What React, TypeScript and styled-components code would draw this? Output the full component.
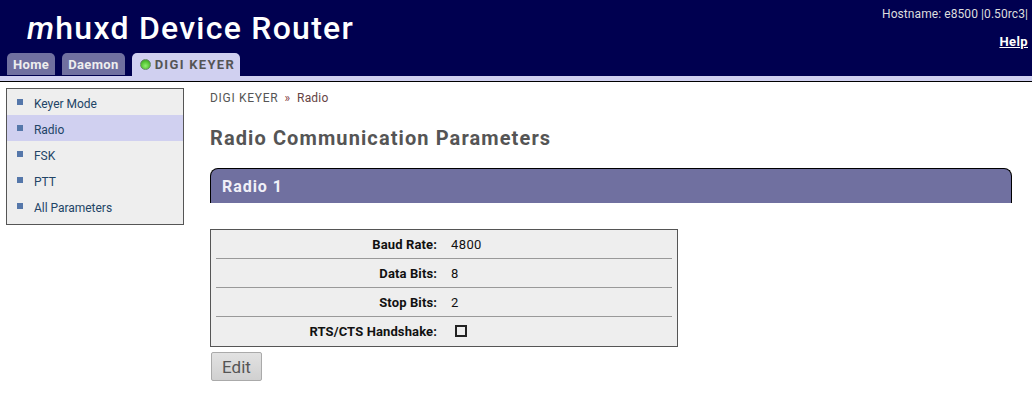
import React from "react";
import styled, { createGlobalStyle } from "styled-components";

const GlobalStyle = createGlobalStyle`
  html, body {
    margin: 0;
    padding: 0;
    background: #fff;
    font-family: "Roboto", "Liberation Sans", sans-serif;
  }
`;

const navItems = ["Keyer Mode", "Radio", "FSK", "PTT", "All Parameters"];

const params = [
  { label: "Baud Rate:", value: "4800" },
  { label: "Data Bits:", value: "8" },
  { label: "Stop Bits:", value: "2" },
];

export default function App() {
  return (
    <Page>
      <GlobalStyle />
      <Header>
        <TopRow>
          <Title>
            <em>m</em>huxd Device Router
          </Title>
          <Meta>
            <Hostname>Hostname: e8500 |0.50rc3|</Hostname>
            <Help href="#">Help</Help>
          </Meta>
        </TopRow>
        <Tabs>
          <Tab>Home</Tab>
          <Tab>Daemon</Tab>
          <Tab $active>
            <Led />
            DIGI KEYER
          </Tab>
        </Tabs>
      </Header>
      <Band />
      <Body>
        <Sidebar>
          {navItems.map((item) => (
            <NavItem key={item} $active={item === "Radio"}>
              <Bullet />
              {item}
            </NavItem>
          ))}
        </Sidebar>
        <Main>
          <Crumbs>
            DIGI KEYER <Sep>»</Sep> <CrumbLink>Radio</CrumbLink>
          </Crumbs>
          <Heading>Radio Communication Parameters</Heading>
          <Banner>Radio 1</Banner>
          <ParamTable>
            {params.map((p) => (
              <Row key={p.label}>
                <Label>{p.label}</Label>
                <Value>{p.value}</Value>
              </Row>
            ))}
            <Row>
              <Label>RTS/CTS Handshake:</Label>
              <Value>
                <Check />
              </Value>
            </Row>
          </ParamTable>
          <EditButton>Edit</EditButton>
        </Main>
      </Body>
    </Page>
  );
}

const Page = styled.div`
  width: 1032px;
  height: 409px;
  overflow: hidden;
  background: #fff;
`;

const Header = styled.div`
  height: 76px;
  background: #000050;
  display: flex;
  flex-direction: column;
  justify-content: space-between;
`;

const TopRow = styled.div`
  display: flex;
  justify-content: space-between;
  height: 53px;
`;

const Title = styled.h1`
  margin: 9px 0 0 27px;
  font-size: 32px;
  line-height: 38px;
  font-weight: 500;
  color: #fff;
  letter-spacing: 1.25px;
  white-space: nowrap;

  em {
    font-style: italic;
  }
`;

const Meta = styled.div`
  display: flex;
  flex-direction: column;
  align-items: flex-end;
  padding: 7px 0 0;
`;

const Hostname = styled.div`
  font-size: 12px;
  line-height: 14px;
  color: #ddd;
  padding-right: 4px;
  letter-spacing: 0.08px;
`;

const Help = styled.a`
  margin-top: 13px;
  padding-right: 4px;
  font-size: 13px;
  line-height: 15px;
  font-weight: 700;
  letter-spacing: 0.4px;
  color: #fff;
`;

const Tabs = styled.div`
  display: flex;
  align-items: flex-end;
  gap: 7px;
  padding-left: 7px;
  height: 23px;
`;

const Tab = styled.div<{ $active?: boolean }>`
  display: flex;
  align-items: center;
  gap: 4px;
  box-sizing: border-box;
  height: ${(p) => (p.$active ? "23px" : "22px")};
  margin-bottom: ${(p) => (p.$active ? "0" : "1px")};
  padding: 0 ${(p) => (p.$active ? "5px 0 8px" : "6px")};
  border-radius: 5px 5px 0 0;
  font-size: 13px;
  font-weight: 700;
  letter-spacing: ${(p) => (p.$active ? "1.3px" : "0.35px")};
  color: ${(p) => (p.$active ? "#555" : "#eee")};
  background: ${(p) => (p.$active ? "#d0d0f0" : "#7070a0")};
`;

const Led = styled.span`
  width: 11px;
  height: 11px;
  border-radius: 50%;
  background: radial-gradient(circle at 50% 65%, #90f070 0%, #50c030 60%, #3a8a30 100%);
  border: 1px solid #668866;
  box-sizing: border-box;
`;

const Band = styled.div`
  height: 5px;
  background: #d0d0f0;
  border-bottom: 1px solid #000;
`;

const Body = styled.div`
  display: flex;
  align-items: flex-start;
  padding: 6px 20px 0 6px;
`;

const Sidebar = styled.div`
  box-sizing: border-box;
  width: 178px;
  flex: none;
  border: 1px solid #555;
  background: #eee;
  padding: 0 0 5px;
`;

const NavItem = styled.div<{ $active?: boolean }>`
  display: flex;
  align-items: center;
  box-sizing: border-box;
  height: 26px;
  padding: 3px 0 0 10px;
  font-size: 12px;
  letter-spacing: -0.03px;
  color: #224466;
  background: ${(p) => (p.$active ? "#d0d0f0" : "transparent")};
`;

const Bullet = styled.span`
  width: 6px;
  height: 6px;
  margin-right: 11px;
  margin-top: -4px;
  background: #5577aa;
`;

const Main = styled.div`
  flex: 1;
  margin-left: 26px;
`;

const Crumbs = styled.div`
  font-size: 12px;
  line-height: 14px;
  margin-top: 3px;
  color: #555;
  letter-spacing: 0.7px;
`;

const Sep = styled.span`
  color: #884444;
  margin: 0 2.5px;
`;

const CrumbLink = styled.span`
  color: #664444;
  letter-spacing: 0.2px;
`;

const Heading = styled.h2`
  margin: 19px 0 0;
  font-size: 20px;
  line-height: 28px;
  font-weight: 700;
  color: #555;
  letter-spacing: 1.1px;
`;

const Banner = styled.div`
  box-sizing: border-box;
  margin-top: 16px;
  height: 35px;
  padding: 8px 0 0 11px;
  background: #7070a0;
  border: 1px solid #000;
  border-bottom: none;
  border-radius: 8px 8px 0 0;
  color: #f0f0f8;
  font-size: 16px;
  font-weight: 700;
  line-height: 20px;
  letter-spacing: 0.95px;
`;

const ParamTable = styled.div`
  box-sizing: border-box;
  width: 468px;
  height: 118px;
  margin-top: 26px;
  padding: 0 5px;
  background: #eee;
  border: 1px solid #555;
`;

const Row = styled.div`
  display: grid;
  box-sizing: border-box;
  grid-template-columns: 221px 1fr;
  column-gap: 14px;
  align-items: center;
  height: 28px;
  font-size: 13px;
  color: #111;

  & + & {
    height: 29px;
    border-top: 1px solid #999;
  }
`;

const Label = styled.div`
  text-align: right;
  font-weight: 700;
  letter-spacing: 0.12px;
`;

const Value = styled.div`
  display: flex;
  align-items: center;
  letter-spacing: 0.4px;
`;

const Check = styled.span`
  box-sizing: border-box;
  width: 12px;
  height: 12px;
  margin-left: 4px;
  border: 2px solid #222;
  background: #eee;
`;

const EditButton = styled.button`
  display: block;
  box-sizing: border-box;
  width: 51px;
  height: 29px;
  margin: 5px 0 0 1px;
  padding: 0;
  border: 1px solid #aaa;
  border-radius: 2px;
  background: linear-gradient(#e2e2e2, #d0d0d0);
  font-family: inherit;
  font-size: 17px;
  color: #555;
`;
